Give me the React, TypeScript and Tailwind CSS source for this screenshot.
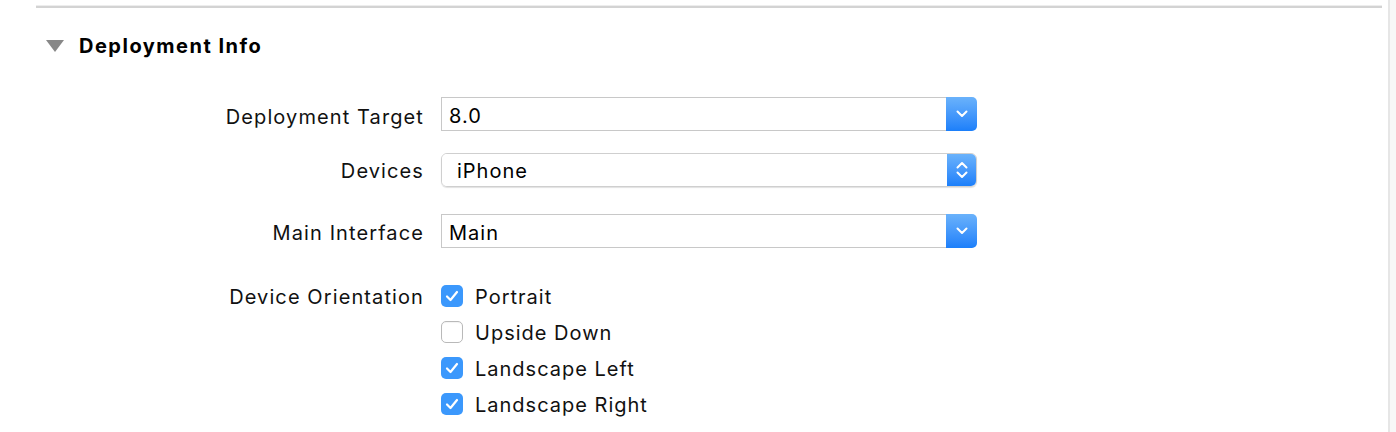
import React from "react";

const font = { fontFamily: '"Inter", "Liberation Sans", sans-serif' };

function ChevronDown() {
  return (
    <svg width="12" height="8" viewBox="0 0 12 8" fill="none">
      <path d="M1.5 1.5 L6 6 L10.5 1.5" stroke="white" strokeWidth="2" strokeLinecap="round" strokeLinejoin="round" />
    </svg>
  );
}

function UpDown() {
  return (
    <svg width="12" height="20" viewBox="0 0 12 20" fill="none">
      <path d="M1.5 7.5 L6 3 L10.5 7.5" stroke="white" strokeWidth="2" strokeLinecap="round" strokeLinejoin="round" />
      <path d="M1.5 12.5 L6 17 L10.5 12.5" stroke="white" strokeWidth="2" strokeLinecap="round" strokeLinejoin="round" />
    </svg>
  );
}

function Combo({ value }: { value: string }) {
  return (
    <div className="flex h-[34px] w-[536px]">
      <div className="flex flex-1 items-center border border-[#c8c8c8] border-r-0 bg-white pl-[7px] pt-[4px] text-[20px] tracking-[1px] text-black">
        {value}
      </div>
      <div className="flex w-[31px] items-center justify-center rounded-r-[5px] bg-gradient-to-b from-[#6ab2fb] to-[#1b7ffa]">
        <ChevronDown />
      </div>
    </div>
  );
}

function Popup({ value }: { value: string }) {
  return (
    <div className="flex h-[34px] w-[536px] overflow-hidden rounded-[6px] border border-[#cfcfcf] shadow-[0_1px_1px_rgba(0,0,0,0.12)]">
      <div className="flex flex-1 items-center bg-white pl-[15px] pt-[2px] text-[20px] tracking-[1px] text-black">{value}</div>
      <div className="flex w-[29px] items-center justify-center bg-gradient-to-b from-[#6ab2fb] to-[#1b7ffa]">
        <UpDown />
      </div>
    </div>
  );
}

function Check({ checked, label }: { checked: boolean; label: string }) {
  return (
    <div className="flex h-[36px] items-center">
      {checked ? (
        <div className="flex h-[22px] w-[22px] items-center justify-center rounded-[5px] bg-[#3b98fc]">
          <svg width="14" height="12" viewBox="0 0 14 12" fill="none">
            <path d="M2 6.5 L5.5 10 L12 2" stroke="white" strokeWidth="2.2" strokeLinecap="round" strokeLinejoin="round" />
          </svg>
        </div>
      ) : (
        <div className="h-[22px] w-[22px] rounded-[5px] border border-[#b9b9b9] bg-white shadow-[inset_0_1px_1px_rgba(0,0,0,0.05)]" />
      )}
      <span className="ml-[12px] pt-[2px] text-[20px] tracking-[1px] text-[#111]">{label}</span>
    </div>
  );
}

function Label({ children, pt }: { children: React.ReactNode; pt: string }) {
  return <div className={`w-[424px] text-right text-[20px] tracking-[1.1px] text-[#111] ${pt}`}>{children}</div>;
}

export default function App() {
  return (
    <div className="relative h-[432px] w-[1396px] overflow-hidden bg-white" style={font}>
      <div className="flex h-full">
        <div className="flex-1">
          <div className="ml-[36px] mr-[6px] mt-[5px] h-[3px] border-t border-[#ededed] bg-[#d3d3d3]" />
          <div className="mt-[26px] flex h-[24px] items-center">
            <svg className="ml-[46px]" width="18" height="12" viewBox="0 0 18 12">
              <path d="M0 0 H18 L9 12 Z" fill="#888888" />
            </svg>
            <span className="ml-[15px] text-[20px] font-bold tracking-[1.5px] text-black">Deployment Info</span>
          </div>
          <div className="mt-[39px] flex h-[34px] items-center">
            <Label pt="pt-[5px]">Deployment Target</Label>
            <div className="ml-[17px]">
              <Combo value="8.0" />
            </div>
          </div>
          <div className="mt-[22px] flex h-[34px] items-center">
            <Label pt="pt-[2px]">Devices</Label>
            <div className="ml-[17px]">
              <Popup value="iPhone" />
            </div>
          </div>
          <div className="mt-[27px] flex h-[34px] items-center">
            <Label pt="pt-[4px]">Main Interface</Label>
            <div className="ml-[17px]">
              <Combo value="Main" />
            </div>
          </div>
          <div className="mt-[30px] flex">
            <div className="flex h-[36px] items-center">
              <Label pt="pt-[2px]">Device Orientation</Label>
            </div>
            <div className="ml-[17px] flex flex-col">
              <Check checked label="Portrait" />
              <Check checked={false} label="Upside Down" />
              <Check checked label="Landscape Left" />
              <Check checked label="Landscape Right" />
            </div>
          </div>
        </div>
        <div className="w-[8px] border-l-2 border-[#e6e6e6] bg-[#f7f7f7]" />
      </div>
    </div>
  );
}
